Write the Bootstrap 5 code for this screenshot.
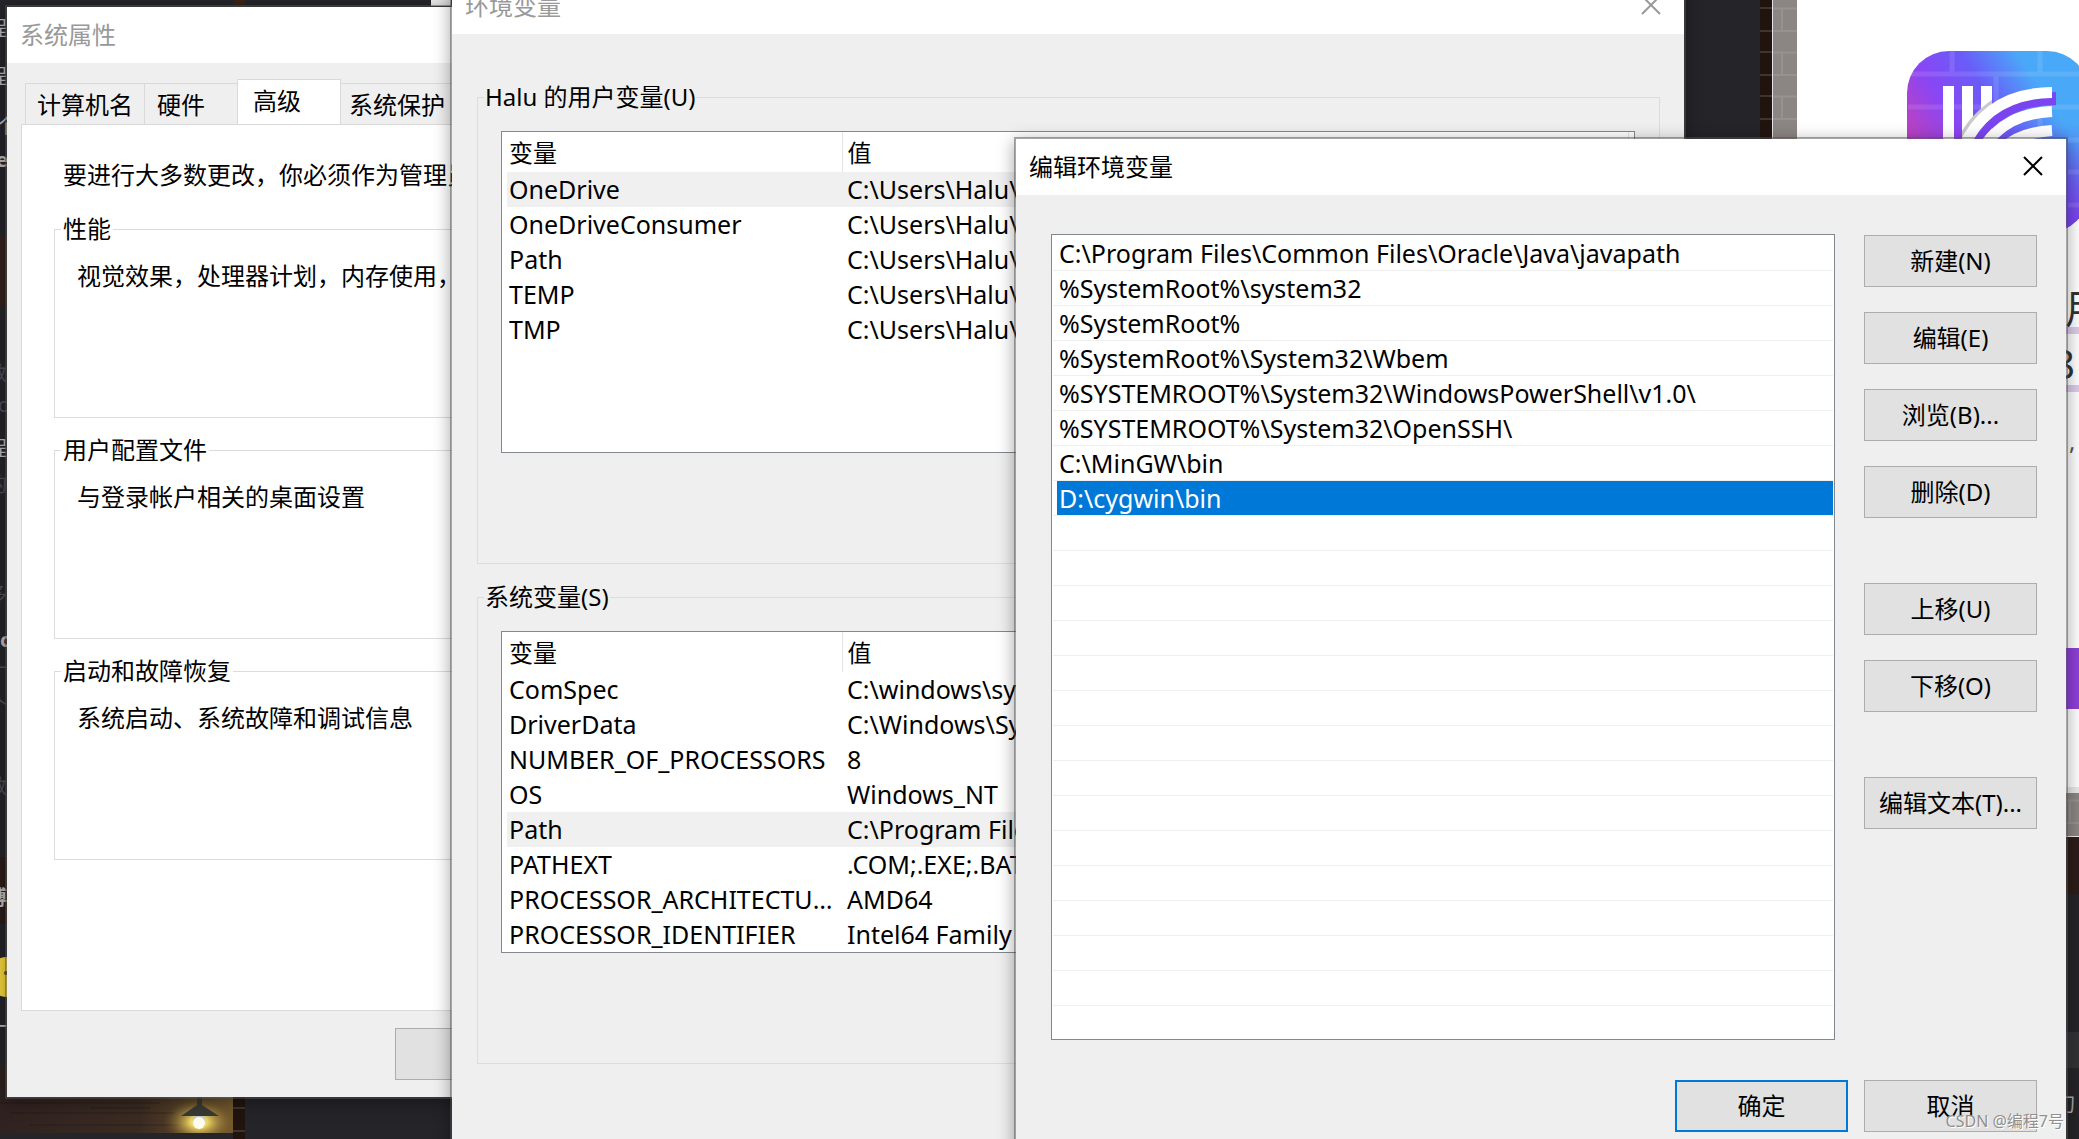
<!DOCTYPE html>
<html lang="zh-CN">
<head>
<meta charset="utf-8">
<meta name="viewport" content="width=device-width, initial-scale=1">
<title>环境变量</title>
<link href="https://cdn.jsdelivr.net/npm/bootstrap@5.3.0/dist/css/bootstrap.min.css" rel="stylesheet">
<style>
  body { background: #252429; color: #000; font-family: "Noto Sans", "Noto Sans CJK SC", sans-serif; font-size: 24px; line-height: 32px; }
  .desktop { height: 100vh; isolation: isolate; }
  .scene { inset: 0; width: 100%; height: 100%; }
  .win { background: #efefef; border: 2px solid rgba(80,80,80,.5); background-clip: padding-box; box-shadow: 0 4px 16px rgba(0,0,0,.35); }
  .win-title { height: 56px; background: #fff; font-size: 24px; font-weight: 400; padding: 0 8px 0 13px; }
  .win-title.muted { color: #999; }
  .win-x { width: 50px; height: 36px; border: 0; background: none; line-height: 0; padding: 0 0 2px; }

  .win-props { left: 5px; top: 5px; width: 579px; bottom: 40px; }
  .tabs { padding: 16px 12px 0 18px; margin-bottom: -1px; }
  .tabs .tab { height: 42px; border: 1px solid #d9d9d9; background: #efefef; color: #000; padding: 2px 11px 0; text-align: left; margin-right: -1px; }
  .tabs .tab-hw { width: 94px; padding-left: 12px; }
  .tabs .tab.on { height: 46px; width: 104px; background: #fff; border-bottom: 0; padding: 0 15px 4px; }
  .tabs .tab-sp { padding: 2px 8px 0; }
  .pane { background: #fff; border: 1px solid #d9d9d9; margin: 0 14px; padding: 34px 32px 0; }
  .pane-note { padding-left: 9px; margin-bottom: 22px; height: 32px; }

  .group { border: 1px solid #dcdcdc; }
  .group-name { float: none; width: auto; margin: 0 0 0 6px; padding: 0 2px; font-size: 24px; line-height: 32px; }
  .pane .group { height: 205px; margin-bottom: 16px; }
  .pane .group p { padding: 15px 22px; margin: 0; }
  .props-foot { padding: 17px 14px 17px 0; }

  .win-env { left: 450px; top: -24px; right: 393px; bottom: -80px; }
  .env-body { padding: 47px 24px 0 25px; }
  .env-body .group { height: 483px; margin-bottom: 17px; padding: 0 24px 0 23px; }
  .env-body .group-name { margin-left: -17px; padding: 0 1px; }
  .env-list { height: 322px; margin-top: 18px; background: #fff; border: 1px solid #828790; overflow: hidden; padding: 0 5px; }
  .env-table { table-layout: fixed; border-collapse: collapse; width: 100%; }
  .env-table th { height: 40px; font-weight: 400; padding: 2px 2px 0; border-right: 1px solid #e5e5e5; }
  .env-table td { height: 35px; padding: 0 2px 2px; white-space: nowrap; overflow: hidden; text-overflow: ellipsis; }
  .env-table .col-name { width: 335px; }
  .env-table th + th, .env-table td + td { padding-left: 5px; }
  .env-table .picked { background: #f0f0f0; }
  .latin { font-size: 25px; }

  .win-edit { left: 1014px; top: 137px; right: 11px; bottom: -60px; }
  .edit-body { padding: 39px 29px 0 35px; gap: 29px; }
  .path-list { height: 806px; background: #fff; border: 1px solid #828790; padding: 1px; }
  .path-list li { height: 35px; border-bottom: 1px solid #efefef; padding-left: 4px; font-size: 25px; line-height: 34px; white-space: nowrap; }
  .path-list li span { display: block; padding-left: 2px; }
  .path-list li.picked span { background: #0078d7; color: #fff; }
  .side { width: 173px; gap: 25px; padding-top: 1px; }
  .w-btn { width: 173px; height: 52px; border: 1px solid #adadad; background: #e1e1e1; color: #000; padding: 0; white-space: nowrap; }
  .w-btn.main { border: 2px solid #0078d7; }
  .gap-above { margin-top: 40px; }
  .edit-foot { padding: 40px 29px 0; gap: 16px; }
  .stamp { right: 15px; bottom: 2px; font-size: 16px; color: #909090; text-shadow: 1px 1px 0 #fff; }
</style>
<script src="https://cdn.jsdelivr.net/npm/bootstrap@5.3.0/dist/js/bootstrap.bundle.min.js"></script>
</head>
<body>
<main class="desktop position-relative overflow-hidden">
  <!-- wallpaper and the browser page behind the dialogs -->
  <svg class="scene position-absolute" viewBox="0 0 2079 1139" preserveAspectRatio="none" aria-hidden="true">
    <defs>
      <linearGradient id="logoFill" x1="0" y1=".65" x2="1" y2="0"><stop offset="0" stop-color="#d43fa6"/><stop offset=".3" stop-color="#8a46f4"/><stop offset=".5" stop-color="#6a5cf8"/><stop offset=".72" stop-color="#4aa8f8"/><stop offset="1" stop-color="#4aa8f8"/></linearGradient>
      <linearGradient id="logoLow" x1="0" y1="0" x2="0" y2="1"><stop offset=".4" stop-color="#7a40ec" stop-opacity="0"/><stop offset="1" stop-color="#7a40ec"/></linearGradient>
      <radialGradient id="glow"><stop offset="0" stop-color="#fffbe0"/><stop offset=".25" stop-color="#e8cf60"/><stop offset="1" stop-color="#6b4d24" stop-opacity="0"/></radialGradient>
      <linearGradient id="wood" x1="0" y1="0" x2="1" y2="0"><stop offset="0" stop-color="#2f2220"/><stop offset=".6" stop-color="#3a2b22"/><stop offset="1" stop-color="#74592d"/></linearGradient>
      <pattern id="bricks" width="24" height="44" patternUnits="userSpaceOnUse"><rect width="24" height="44" fill="#8b8583"/><path d="M0 8.500H24M0 31H24M6 9V31" stroke="#979290" stroke-width="2"/></pattern>
      <pattern id="darkBricks" width="12" height="44" patternUnits="userSpaceOnUse"><rect width="12" height="44" fill="#21140f"/><path d="M0 8H12M0 31H12" stroke="#3e3531" stroke-width="2"/></pattern>
    </defs>
    <rect x="233" y="0" width="12" height="5" fill="#3a231b"/>
    <rect x="431" y="0" width="20" height="6" fill="#eee"/>
    <rect x="0" y="237" width="7" height="68" fill="#35211c"/>
    <rect x="0" y="857" width="7" height="67" fill="#2b1c19"/>
    <rect x="0" y="1065" width="233" height="68" fill="url(#wood)"/>
    <path d="M0 1103H160M10 1113H175M30 1125H180M90 1108H150" stroke="#1e1412" stroke-opacity=".45" stroke-width="1"/>
    <ellipse cx="199" cy="1122" rx="36" ry="24" fill="url(#glow)"/>
    <rect x="0" y="1133" width="233" height="6" fill="#252429"/>
    <path d="M197 1096h5v9l17 11h-38l16-11z" fill="#393a35"/>
    <rect x="193" y="1116" width="12" height="8" rx="2" fill="#c9c9c0"/><circle cx="199" cy="1123" r="6" fill="#fffdf0"/>
    <rect x="233" y="1097" width="12" height="42" fill="url(#darkBricks)"/>
    <circle cx="7" cy="977" r="20" fill="#f2d43c"/><circle cx="6" cy="973" r="2" fill="#5a4420"/>
    <rect x="1760" y="0" width="12" height="140" fill="url(#darkBricks)"/>
    <rect x="1773" y="0" width="306" height="837" fill="url(#bricks)"/>
    <rect x="1772" y="0" width="1" height="140" fill="#e5e5e5"/>
    <rect x="1797" y="0" width="282" height="787" fill="#fff"/>
    <rect x="2060" y="787" width="19" height="6" fill="#e8e8ea"/>
    <rect x="2060" y="836" width="19" height="1" fill="#eee"/>
    <rect x="2060" y="837" width="19" height="57" fill="#2c1d19"/>
    <rect x="2060" y="894" width="19" height="245" fill="#252429"/>
    <rect x="2060" y="1032" width="19" height="36" fill="#333336"/>
    <rect x="1907" y="51" width="182" height="182" rx="42" fill="url(#logoFill)"/>
    <rect x="1907" y="51" width="182" height="182" rx="42" fill="url(#logoLow)"/>
    <path d="M1908 107H2079M1908 74H2079M1952 51V74M2040 51V74M1996 74V107M2040 107V140M2068 140H2079M2068 172H2079M2068 205H2079" stroke="#fff" stroke-opacity=".11" stroke-width="5" fill="none"/>
    <path d="M1943 86h11v60h-11zM1962 86h11v60h-11zM1981 86h11v60h-11z" fill="#fff"/>
    <path d="M1962 131C1970 118 1980 108 1992 100V108L1962 140Z" fill="#c9c9cc"/>
    <path d="M2052 92.500C2010 93 1980 110 1963 148" stroke="#7a45f0" stroke-width="13" fill="none" transform="translate(4 6)"/>
    <path d="M2052 92.500C2010 93 1980 110 1963 148M2052 111.500C2020 113 1999 124 1983 148M2052 130.500C2030 132 2015 137 2004 148" stroke="#fff" stroke-width="11" fill="none"/>
    <rect x="2066" y="327" width="13" height="7" fill="#dccbea"/><rect x="2066" y="385" width="13" height="7" fill="#dccbea"/>
    <rect x="2066" y="648" width="13" height="61" fill="#8d3fd8"/>
    <g font-family="Noto Sans, Noto Sans CJK SC, sans-serif">
      <g font-size="40" fill="#333"><text x="2065" y="323">用</text><text x="2052" y="379">8</text></g>
      <text x="2069" y="450" font-size="24" fill="#555">,</text>
      <text x="2055" y="1112" font-size="20" fill="#aaa">幻</text>
      <g font-size="20" fill="#b8b8bd"><text x="-13" y="36">程</text><text x="-13" y="84">程</text><text x="-4" y="134">个</text><text x="-4" y="167" font-weight="700">ea</text><text x="-13" y="456">程</text><text x="0" y="647" font-weight="700">c</text><text x="-13" y="905" font-weight="700">博</text><text x="-13" y="1034">一</text></g>
      <g font-size="20" fill="#4d4d59"><text x="-13" y="381">数</text><text x="-2" y="412">c</text><text x="-13" y="492">的</text><text x="-13" y="602">多</text><text x="-13" y="682">丁</text><text x="-13" y="713">个</text><text x="-13" y="794">数</text></g>
    </g>
  </svg>

  <section class="win win-props position-absolute d-flex flex-column" aria-label="系统属性">
    <h1 class="win-title muted d-flex align-items-center m-0 flex-shrink-0"><span>系统属性</span></h1>
    <nav class="tabs d-flex align-items-end" role="tablist">
      <button class="tab" role="tab">计算机名</button>
      <button class="tab tab-hw" role="tab">硬件</button>
      <button class="tab on" role="tab" aria-selected="true">高级</button>
      <button class="tab tab-sp" role="tab">系统保护</button>
    </nav>
    <div class="pane flex-grow-1 overflow-hidden text-nowrap">
      <p class="pane-note">要进行大多数更改，你必须作为管理员</p>
      <fieldset class="group"><legend class="group-name bg-white">性能</legend><p>视觉效果，处理器计划，内存使用，</p></fieldset>
      <fieldset class="group"><legend class="group-name bg-white">用户配置文件</legend><p>与登录帐户相关的桌面设置</p></fieldset>
      <fieldset class="group"><legend class="group-name bg-white">启动和故障恢复</legend><p>系统启动、系统故障和调试信息</p></fieldset>
    </div>
    <div class="props-foot d-flex justify-content-end"><button class="w-btn" aria-label="确定"></button></div>
  </section>

  <section class="win win-env position-absolute" aria-label="环境变量">
    <header class="win-title muted d-flex align-items-center justify-content-between">
      <span>环境变量</span>
      <button class="win-x" aria-label="关闭"><svg width="20" height="20" viewBox="0 0 20 20" stroke="#999" stroke-width="2"><path d="M1 1L19 19M19 1L1 19"/></svg></button>
    </header>
    <div class="env-body">
      <fieldset class="group"><legend class="group-name">Halu 的用户变量(U)</legend>
        <div class="env-list"><table class="env-table">
          <colgroup><col class="col-name"><col></colgroup>
          <thead><tr><th>变量</th><th>值</th></tr></thead>
          <tbody class="latin">
            <tr class="picked"><td>OneDrive</td><td>C:\Users\Halu\</td></tr>
            <tr><td>OneDriveConsumer</td><td>C:\Users\Halu\</td></tr>
            <tr><td>Path</td><td>C:\Users\Halu\</td></tr>
            <tr><td>TEMP</td><td>C:\Users\Halu\</td></tr>
            <tr><td>TMP</td><td>C:\Users\Halu\</td></tr>
          </tbody></table></div>
      </fieldset>
      <fieldset class="group"><legend class="group-name">系统变量(S)</legend>
        <div class="env-list"><table class="env-table">
          <colgroup><col class="col-name"><col></colgroup>
          <thead><tr><th>变量</th><th>值</th></tr></thead>
          <tbody class="latin">
            <tr><td>ComSpec</td><td>C:\windows\sys</td></tr>
            <tr><td>DriverData</td><td>C:\Windows\Sy</td></tr>
            <tr><td>NUMBER_OF_PROCESSORS</td><td>8</td></tr>
            <tr><td>OS</td><td>Windows_NT</td></tr>
            <tr class="picked"><td>Path</td><td>C:\Program File</td></tr>
            <tr><td>PATHEXT</td><td>.COM;.EXE;.BAT</td></tr>
            <tr><td>PROCESSOR_ARCHITECTURE</td><td>AMD64</td></tr>
            <tr><td>PROCESSOR_IDENTIFIER</td><td>Intel64 Family 6</td></tr>
          </tbody></table></div>
      </fieldset>
    </div>
  </section>

  <section class="win win-edit position-absolute" aria-label="编辑环境变量">
    <header class="win-title d-flex align-items-center justify-content-between">
      <span>编辑环境变量</span>
      <button class="win-x" aria-label="关闭"><svg width="20" height="20" viewBox="0 0 20 20" stroke="#000" stroke-width="2"><path d="M1 1L19 19M19 1L1 19"/></svg></button>
    </header>
    <div class="edit-body d-flex">
      <ul class="path-list list-unstyled flex-grow-1 m-0">
        <li><span>C:\Program Files\Common Files\Oracle\Java\javapath</span></li>
        <li><span>%SystemRoot%\system32</span></li>
        <li><span>%SystemRoot%</span></li>
        <li><span>%SystemRoot%\System32\Wbem</span></li>
        <li><span>%SYSTEMROOT%\System32\WindowsPowerShell\v1.0\</span></li>
        <li><span>%SYSTEMROOT%\System32\OpenSSH\</span></li>
        <li><span>C:\MinGW\bin</span></li>
        <li class="picked"><span>D:\cygwin\bin</span></li>
        <li></li><li></li><li></li><li></li><li></li><li></li><li></li><li></li><li></li><li></li><li></li><li></li><li></li><li></li>
      </ul>
      <div class="side d-flex flex-column flex-shrink-0">
        <button class="w-btn">新建(N)</button>
        <button class="w-btn">编辑(E)</button>
        <button class="w-btn">浏览(B)...</button>
        <button class="w-btn">删除(D)</button>
        <button class="w-btn gap-above">上移(U)</button>
        <button class="w-btn">下移(O)</button>
        <button class="w-btn gap-above">编辑文本(T)...</button>
      </div>
    </div>
    <div class="edit-foot d-flex justify-content-end">
      <button class="w-btn main">确定</button>
      <button class="w-btn">取消</button>
    </div>
  </section>
  <div class="stamp position-absolute">CSDN @编程7号</div>
</main>
</body>
</html>
